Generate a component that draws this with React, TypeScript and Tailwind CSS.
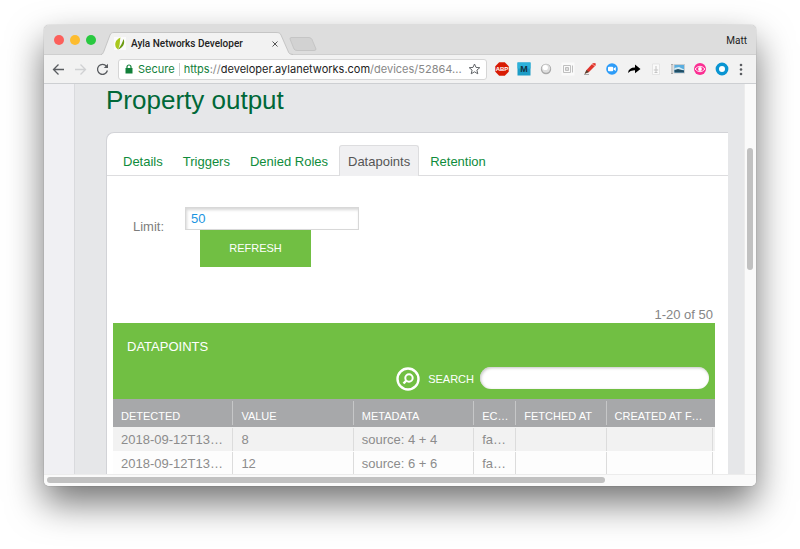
import React from "react";

type Datapoint = { detected: string; value: string; metadata: string; echo: string };

const rows: Datapoint[] = [
  { detected: "2018-09-12T13…", value: "8", metadata: "source: 4 + 4", echo: "fa…" },
  { detected: "2018-09-12T13…", value: "12", metadata: "source: 6 + 6", echo: "fa…" },
];

const headers = ["DETECTED", "VALUE", "METADATA", "EC…", "FETCHED AT", "CREATED AT F…"];
const tabs = ["Details", "Triggers", "Denied Roles", "Datapoints", "Retention"];

function TitleBar() {
  return (
    <div className="flex h-[30px] shrink-0 items-end border-b border-[#cfcfcf] bg-[#dddddd] pl-[10px]">
      <div className="flex h-[28px] w-[47px] items-center gap-[6px]">
        <button aria-label="Close window" className="size-[10px] rounded-full bg-[#fc605b]" />
        <button aria-label="Minimize window" className="size-[10px] rounded-full bg-[#fdbc2f]" />
        <button aria-label="Zoom window" className="size-[10px] rounded-full bg-[#29c940]" />
      </div>
      <div className="relative -mb-px flex h-[23px] w-[192px] items-center pl-[13px] pr-[14px]">
        <svg className="absolute inset-0" width="192" height="23" viewBox="0 0 192 23" aria-hidden="true">
          <path d="M0 23 C2 22 2 21 3 19 L9 3 C10 1 11 .5 13 .5 H175 C178 .5 179 1 180 3 L187 19 C188 22 189 22 192 23 Z" fill="#f2f2f2" />
          <path d="M0 22.5 C2 22 2 21 3 19 L9 3 C10 1 11 .5 13 .5 H175 C178 .5 179 1 180 3 L187 19 C188 22 189 22 192 22.5" fill="none" stroke="#bdbdbd" strokeWidth="0.8" />
        </svg>
        <svg className="relative shrink-0" width="12" height="13" viewBox="0 0 12 13" aria-hidden="true">
          <rect width="12" height="13" fill="#fbfbfb" />
          <path d="M6.500 .5 C1 3 .5 7 2 10.500 L4 12.500 C6.500 8 5.500 4 6.500 .5Z" fill="#a9c81c" />
          <path d="M9.500 2 C11.500 6 9 11 4 12.500 C6.500 9 8.500 6 9.500 2Z" fill="#6d9b12" />
        </svg>
        <span className="relative ml-[5px] flex-1 whitespace-nowrap font-[Roboto,sans-serif] text-[10px] font-medium leading-4 text-[#222]">
          Ayla Networks Developer
        </span>
        <button aria-label="Close tab" className="relative">
          <svg width="8" height="8" viewBox="0 0 8 8" fill="none" stroke="#555" strokeWidth="1">
            <path d="M1.500 1.500 6.500 6.500M6.500 1.500 1.500 6.500" />
          </svg>
        </button>
      </div>
      <button aria-label="New tab" className="mb-[3px] -ml-[4px]">
        <svg className="block" width="28" height="14" viewBox="0 0 28 14">
          <path d="M2 .5 H20 Q22 .5 23 2.500 L27 12 Q27 13.500 25 13.500 H8 Q6 13.500 5 12 L1 2 Q1 .5 2 .5Z" fill="#d2d2d2" stroke="#c0c0c0" strokeWidth="0.8" />
        </svg>
      </button>
      <button className="mb-[5px] ml-auto mr-[9px] font-[Roboto,sans-serif] text-[10px] leading-4 text-[#222]">Matt</button>
    </div>
  );
}

function NavIcon({ label, color, children }: { label: string; color: string; children: React.ReactNode }) {
  return (
    <button aria-label={label} className="flex w-[22px] shrink-0 items-center justify-center">
      <svg width="13" height="13" viewBox="0 0 13 13" fill="none" stroke={color} strokeWidth="1.300">
        {children}
      </svg>
    </button>
  );
}

function ExtIcon({ label, children }: { label: string; children: React.ReactNode }) {
  return (
    <button aria-label={label} className="flex w-[22px] shrink-0 items-center justify-center">
      <svg width="14" height="14" viewBox="0 0 14 14">
        {children}
      </svg>
    </button>
  );
}

function Toolbar() {
  return (
    <div className="flex h-[29px] shrink-0 items-center border-b border-[#cdcfd2] bg-[#f2f2f2] pl-[3px]">
      <NavIcon label="Back" color="#5a5d61">
        <path d="M12 6.500H1.500M6.500 1.500 1.500 6.500 6.500 11.500" />
      </NavIcon>
      <NavIcon label="Forward" color="#d0d1d3">
        <path d="M1 6.500H11.500M6.500 1.500 11.500 6.500 6.500 11.500" />
      </NavIcon>
      <NavIcon label="Reload" color="#5a5d61">
        <path d="M10.500 3.300A5 5 0 1 0 11.400 7.500" />
        <path d="M12 .8V5H7.800Z" fill="#5a5d61" stroke="none" />
      </NavIcon>
      <div className="ml-[5px] flex h-[21px] min-w-0 flex-1 items-center rounded-[3px] border border-[#d6d6d6] bg-white pl-[6px] pr-[5px] font-[Inter,sans-serif] text-[11px] leading-4">
        <svg width="8" height="10" viewBox="0 0 8 10" aria-hidden="true">
          <path d="M.5 4H7.500V9.500H.5Z" fill="#12803a" />
          <path d="M2 4.500V3A2 2 0 0 1 6 3V4.500" fill="none" stroke="#12803a" strokeWidth="1.200" />
        </svg>
        <span className="ml-[5px] text-[#12803a]">Secure</span>
        <span className="mx-[4px] h-[13px] w-px shrink-0 bg-[#d0d0d0]" />
        <span className="min-w-0 flex-1 truncate text-[#888]">
          <span className="text-[#12803a]">https</span>://<span className="text-[#222]">developer.aylanetworks.com</span>/devices/52864...
        </span>
        <button aria-label="Bookmark this page">
          <svg width="13" height="12" viewBox="0 0 13 12">
            <path d="M6.500 1 8 4.400 11.800 4.700 8.900 7.100 9.800 10.800 6.500 8.800 3.200 10.800 4.100 7.100 1.200 4.700 5 4.400Z" fill="none" stroke="#626569" strokeWidth="1" />
          </svg>
        </button>
      </div>
      <div className="ml-[4px] flex shrink-0">
        <ExtIcon label="Ad blocker">
          <path d="M4.200.3H9.800L13.700 4.200V9.800L9.800 13.700H4.200L.3 9.800V4.200Z" fill="#d81b04" />
          <text x="7" y="9.200" textAnchor="middle" fontFamily="Liberation Sans, sans-serif" fontWeight="bold" fontSize="6" fill="#fff">ABP</text>
        </ExtIcon>
        <ExtIcon label="M extension">
          <rect x=".5" y=".5" width="13" height="13" fill="#1c9cc6" />
          <rect x=".5" y=".5" width="13" height="6" fill="#2cb1da" />
          <text x="7" y="10.200" textAnchor="middle" fontFamily="Liberation Sans, sans-serif" fontWeight="bold" fontSize="9" fill="#12303f">M</text>
        </ExtIcon>
        <ExtIcon label="Sphere extension">
          <circle cx="7" cy="7" r="5.200" fill="#a9a9a9" />
          <circle cx="7" cy="6.500" r="4.200" fill="#dedede" />
          <circle cx="6.300" cy="5.500" r="2.600" fill="#fff" />
        </ExtIcon>
        <ExtIcon label="Reader extension">
          <rect x=".5" y=".5" width="13" height="13" fill="#fafafa" />
          <path d="M2.500 3.500H9.500V10.500H2.500ZM4.500 5.500H7.500V8.500H4.500ZM4.500 7H7.500M11.500 3.500V10.500" fill="none" stroke="#b9b9b9" strokeWidth=".9" />
        </ExtIcon>
        <ExtIcon label="Marker extension">
          <path d="M2 11.500 3.500 8 9.500 1.500Q11 .3 12.800 1.500L12.500 3.500 6 10Z" fill="#e0342c" />
          <path d="M1.500 12 3.500 8 6 10Z" fill="#543" />
          <path d="M9 2 12 4" stroke="#f79a90" />
          <path d="M1 12.500H6" stroke="#aaa" />
        </ExtIcon>
        <ExtIcon label="Video meeting">
          <circle cx="7" cy="7" r="5.800" fill="#2d9cf8" />
          <rect x="3" y="4.800" width="5.200" height="4.400" rx="1" fill="#fff" />
          <path d="M8.600 6.500 10.800 5V9L8.600 7.500Z" fill="#fff" />
        </ExtIcon>
        <ExtIcon label="Share">
          <path d="M1 11Q1.500 5.500 8 5.500V2.500L13.500 7 8 11.200V8.300Q3.500 8 1 11Z" fill="#000" />
        </ExtIcon>
        <ExtIcon label="Download extension">
          <path d="M3.500 2H10.500V12.500H3.500Z" fill="#fafafa" stroke="#dedede" strokeWidth=".7" />
          <path d="M7 4V6M4.800 8H9.200M7 6V10.500M5.500 10.500H8.500" stroke="#c4c4c4" />
        </ExtIcon>
        <ExtIcon label="Picture extension">
          <path d="M1 2.500V11.500M0 2.500H2M0 11.500H2" stroke="#aaa" />
          <rect x="2.500" y="2" width="11.500" height="9.500" fill="#c9ccce" />
          <rect x="3.500" y="3" width="9.500" height="7.500" fill="#5aaee0" />
          <path d="M3.500 6 8 5 13 7.500V8H3.500Z" fill="#d6edf5" />
          <path d="M3.500 8 7 7 13 8.500V10.500H3.500Z" fill="#214f66" />
        </ExtIcon>
        <ExtIcon label="Eye extension">
          <circle cx="7" cy="7" r="6" fill="#fb2e92" />
          <path d="M2 7Q7 1.500 12 7Q7 12.500 2 7Z" fill="none" stroke="#fff" strokeWidth=".9" />
          <circle cx="7" cy="7" r="1.900" fill="#fff" />
        </ExtIcon>
        <ExtIcon label="Ring extension">
          <circle cx="7" cy="7" r="4.700" fill="#fff" stroke="#0a95d2" strokeWidth="3.400" />
        </ExtIcon>
      </div>
      <button aria-label="Browser menu" className="mr-[7px] flex w-[16px] shrink-0 justify-center">
        <svg width="4" height="13" viewBox="0 0 4 13" fill="#5a5d61">
          <circle cx="2" cy="2" r="1.300" />
          <circle cx="2" cy="6.500" r="1.300" />
          <circle cx="2" cy="11" r="1.300" />
        </svg>
      </button>
    </div>
  );
}

function DatapointsTable() {
  return (
    <table className="w-full table-fixed border-collapse text-left">
      <colgroup>
        <col className="w-[20%]" />
        <col className="w-[20%]" />
        <col className="w-[20%]" />
        <col className="w-[7%]" />
        <col className="w-[15%]" />
        <col className="w-[18%]" />
      </colgroup>
      <thead>
        <tr className="bg-[#a7a8aa]">
          {headers.map((h) => (
            <th key={h} className="group h-[28px] p-0 font-normal">
              <div className="whitespace-nowrap border-r border-[#c6c7c8] pb-px pl-2 pt-[7px] text-[11px] leading-4 text-white group-last:border-transparent">
                {h}
              </div>
            </th>
          ))}
        </tr>
      </thead>
      <tbody className="text-[13px] leading-[23px] text-[#8c8c8c]">
        {rows.map((r) => (
          <tr key={r.value} className="h-[24px] odd:bg-[#f2f2f2] even:bg-[#fdfdfd]">
            {[r.detected, r.value, r.metadata, r.echo, "", ""].map((c, i) => (
              <td key={i} className="group p-0 pt-px">
                <div className="h-[23px] whitespace-nowrap border-r border-[#dcdcdc] pl-2 group-last:mr-[2px]">{c}</div>
              </td>
            ))}
          </tr>
        ))}
      </tbody>
    </table>
  );
}

function PropertyPage() {
  return (
    <div className="flex h-full">
      <aside className="w-[30px] shrink-0 bg-[#f0f0f3]" />
      <main className="flex min-w-0 flex-1 flex-col border-l border-[#d9dadd] bg-[#e6e7e9] pl-[31px] pr-4">
        <h1 className="mb-4 text-[26px] leading-8 text-[#006838]">Property output</h1>
        <section className="flex-1 rounded-tl-[8px] border-l border-t border-[#d2d3d7] bg-white">
          <nav className="flex gap-[2px] border-b border-[#dddddf] pl-[7px] pt-3 text-[13px] leading-4">
            {tabs.map((t) => (
              <a
                key={t}
                href="#"
                className={
                  t === "Datapoints"
                    ? "-mb-px rounded-t-[3px] border border-b-0 border-[#dddddf] bg-[#f0f0f2] px-[8px] pb-[6px] pt-[8px] text-[#555]"
                    : "border border-b-0 border-transparent px-[8px] pb-[5px] pt-[8px] text-[#0f8c3c]"
                }
              >
                {t}
              </a>
            ))}
          </nav>
          <form className="flex pl-[26px] pt-[31px]" onSubmit={(e) => e.preventDefault()}>
            <label htmlFor="limit" className="w-[52px] pt-3 text-[13px] leading-4 text-[#7d7d7d]">
              Limit:
            </label>
            <div className="flex flex-col items-start">
              <input
                id="limit"
                defaultValue="50"
                className="h-[23px] w-[174px] border border-[#d8d8d8] bg-white px-[5px] text-[13px] text-[#1b95e0] shadow-[inset_1px_2px_3px_#d8d8d8]"
              />
              <button className="ml-[15px] h-[37px] w-[111px] bg-[#71bf43] text-[11px] text-white">REFRESH</button>
            </div>
          </form>
          <div className="pl-[6px] pr-[13px] pt-10">
            <p className="pr-[2px] text-right text-[13px] leading-4 text-[#858585]">1-20 of 50</p>
            <div className="bg-[#71bf43] pb-2 pl-[14px] pr-[6px] pt-4 text-white">
              <h2 className="text-[13px] leading-4">DATAPOINTS</h2>
              <div className="mt-3 flex h-[24px] items-center justify-end">
                <svg width="24" height="24" viewBox="0 0 24 24" fill="none" stroke="#fff" aria-hidden="true">
                  <circle cx="12" cy="12" r="10.500" strokeWidth="2.400" />
                  <circle cx="13" cy="11" r="3.700" strokeWidth="2" />
                  <path d="M10.300 13.700 7.500 16.500" strokeWidth="2.400" />
                </svg>
                <label htmlFor="search" className="ml-2 mr-[6px] text-[11px] leading-4">
                  SEARCH
                </label>
                <input
                  id="search"
                  className="mb-[2px] h-[22px] w-[229px] rounded-full bg-white px-3 text-[13px] text-[#555] shadow-[inset_1px_1px_3px_#c4c4c4]"
                />
              </div>
            </div>
            <DatapointsTable />
          </div>
        </section>
      </main>
    </div>
  );
}

export default function App() {
  return (
    <div className="flex h-screen overflow-hidden bg-white px-[44px] pb-[63px] pt-[25px] font-['Liberation_Sans',Arial,sans-serif]">
      <div className="flex min-w-0 flex-1 flex-col overflow-hidden rounded-[5px] bg-[#fafafa] shadow-[0_0_1px_rgba(0,0,0,0.5),0_17px_36px_rgba(0,0,0,0.55)]">
        <TitleBar />
        <Toolbar />
        <div className="flex min-h-0 flex-1">
          <div className="min-w-0 flex-1 overflow-hidden">
            <PropertyPage />
          </div>
          <div className="w-[12px] shrink-0 border-l border-[#ececec] bg-[#fafafa] px-[2px] pt-16">
            <div className="h-[122px] w-[6px] rounded-full bg-[#c1c1c1]" />
          </div>
        </div>
        <div className="h-[12px] shrink-0 border-t border-[#ececec] bg-[#fafafa] px-[3px] pt-[2px]">
          <div className="h-[6px] w-[79%] rounded-full bg-[#c1c1c1]" />
        </div>
      </div>
    </div>
  );
}
